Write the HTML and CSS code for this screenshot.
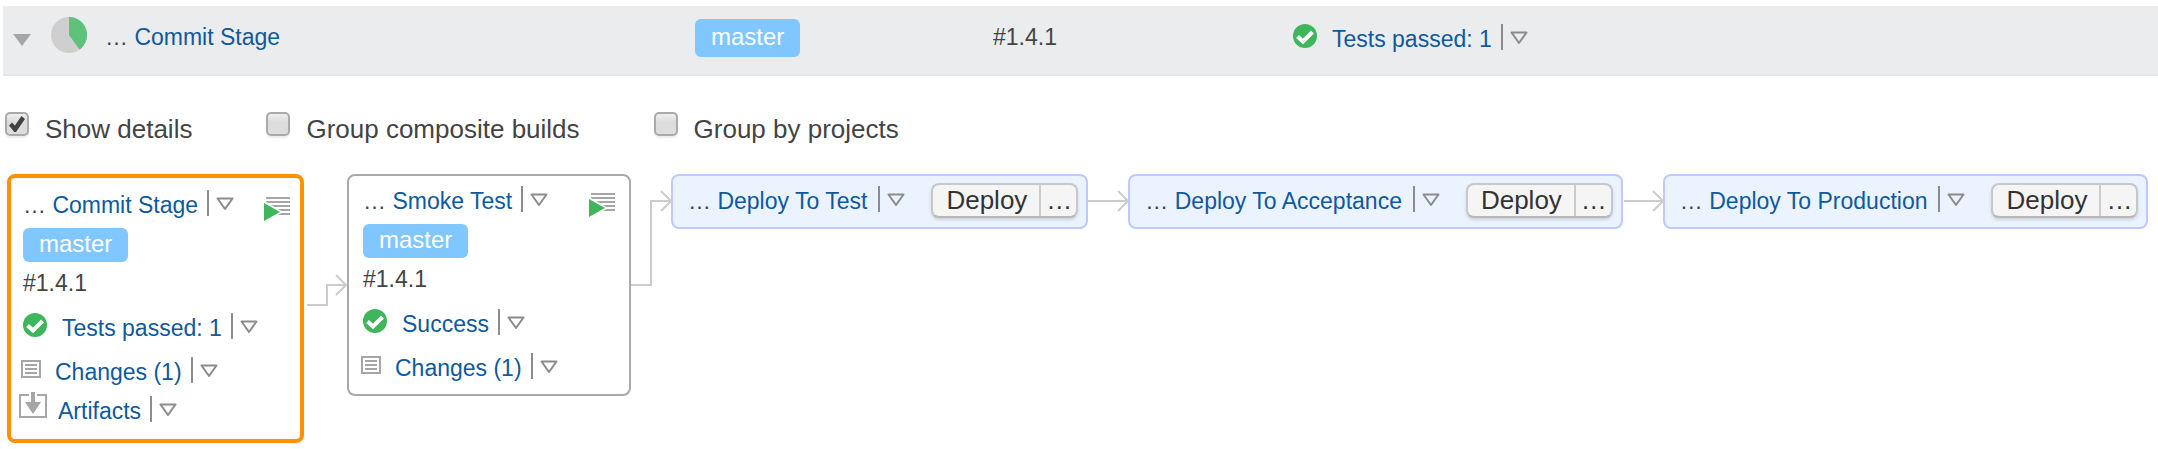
FILE: index.html
```html
<!DOCTYPE html>
<html lang="en">
<head>
<meta charset="utf-8">
<title>Commit Stage – Build chain</title>
<link rel="stylesheet" href="styles.css">
</head>
<body>
<svg class="defs" aria-hidden="true">
  <symbol id="caret" viewBox="0 0 18 13"><path d="M1.500 1.500H16.500L9 12Z" fill="none" stroke="#8c8c8c" stroke-width="2" stroke-linejoin="round"/></symbol>
  <symbol id="ok" viewBox="0 0 24 24"><circle cx="12" cy="12" r="12" fill="#3fb65c"/><path d="M4.500 12.500L10 17.500L19.500 8" fill="none" stroke="#fff" stroke-width="4"/></symbol>
  <symbol id="changes" viewBox="0 0 20 18"><path d="M1 1H19V17H1Z" fill="#fff" stroke="#a6a6a6" stroke-width="2"/><path d="M4 5H16M4 9H16M4 13H16" stroke="#a6a6a6" stroke-width="2"/></symbol>
  <symbol id="artifacts" viewBox="0 0 28 26"><path d="M10 3H1V25H27V3H18" fill="none" stroke="#a6a6a6" stroke-width="2"/><path d="M12 0H16V10H22L14 22L6 10H12Z" fill="#a6a6a6"/></symbol>
  <symbol id="queue" viewBox="0 0 26 24"><path d="M2 1H26M2 5H26M2 9H26M2 13H26M2 17H26" stroke="#a6a6a6" stroke-width="2"/><path d="M-2 2.500L19 15L-2 28Z" fill="#fff"/><path d="M0 6L16 15L0 24Z" fill="#3fb65c"/></symbol>
</svg>

<header class="build">
  <div class="build-name">
    <button class="toggle" type="button" aria-label="Collapse"><svg width="18" height="12" viewBox="0 0 18 12"><path d="M0 0H18L9 12Z" fill="#a6a6a6"/></svg></button>
    <svg class="pie" width="36" height="36" viewBox="0 0 36 36" aria-hidden="true"><circle cx="18" cy="18" r="18" fill="#cfcfcf"/><path d="M18 18V0A18 18 0 0 1 28.600 32.600Z" fill="#5ec27a"/></svg>
    <span class="line">… <a href="#commit">Commit Stage</a></span>
  </div>
  <div><span class="badge badge-tall">master</span></div>
  <div class="build-number line">#1.4.1</div>
  <div class="build-status"><svg class="ok-icon" width="24" height="24"><use href="#ok"/></svg><a class="line" href="#tests">Tests passed: 1</a><button class="more" type="button" aria-label="Test details"><svg width="18" height="13"><use href="#caret"/></svg></button></div>
</header>

<form class="options">
  <label><input type="checkbox" checked>Show details</label>
  <label><input type="checkbox">Group composite builds</label>
  <label><input type="checkbox">Group by projects</label>
</form>

<main class="chain">
  <section class="node node-current" id="commit">
    <div class="row title"><span class="line">… <a href="#commit">Commit Stage</a></span><button class="more" type="button" aria-label="Commit Stage menu"><svg width="18" height="13"><use href="#caret"/></svg></button><svg class="queue" width="26" height="24"><use href="#queue"/></svg></div>
    <span class="badge">master</span>
    <div class="number line">#1.4.1</div>
    <div class="row status"><svg class="ok-icon" width="24" height="24"><use href="#ok"/></svg><a class="line" href="#tests">Tests passed: 1</a><button class="more" type="button" aria-label="Test details"><svg width="18" height="13"><use href="#caret"/></svg></button></div>
    <div class="row changes"><svg class="changes-icon" width="20" height="18"><use href="#changes"/></svg><a class="line" href="#changes-1">Changes (1)</a><button class="more" type="button" aria-label="Change details"><svg width="18" height="13"><use href="#caret"/></svg></button></div>
    <div class="row artifacts"><svg class="artifacts-icon" width="28" height="26"><use href="#artifacts"/></svg><a class="line" href="#files">Artifacts</a><button class="more" type="button" aria-label="Artifact details"><svg width="18" height="13"><use href="#caret"/></svg></button></div>
  </section>

  <svg class="wire wire-step" width="43" height="36" viewBox="0 0 43 36" aria-hidden="true"><path d="M3 31H23V11H42M32 1L42 11L32 21"/></svg>

  <section class="node node-finished" id="smoke">
    <div class="row title"><span class="line">… <a href="#smoke">Smoke Test</a></span><button class="more" type="button" aria-label="Smoke Test menu"><svg width="18" height="13"><use href="#caret"/></svg></button><svg class="queue" width="26" height="24"><use href="#queue"/></svg></div>
    <span class="badge">master</span>
    <div class="number line">#1.4.1</div>
    <div class="row status"><svg class="ok-icon" width="24" height="24"><use href="#ok"/></svg><a class="line" href="#smoke-result">Success</a><button class="more" type="button" aria-label="Result details"><svg width="18" height="13"><use href="#caret"/></svg></button></div>
    <div class="row changes"><svg class="changes-icon" width="20" height="18"><use href="#changes"/></svg><a class="line" href="#changes-2">Changes (1)</a><button class="more" type="button" aria-label="Change details"><svg width="18" height="13"><use href="#caret"/></svg></button></div>
  </section>

  <svg class="wire wire-top" width="40" height="97" viewBox="0 0 40 97" aria-hidden="true"><path d="M0 95H20V11H40M30 1L40 11L30 21"/></svg>

  <section class="node node-deploy">
    <span class="line">… <a href="#test">Deploy To Test</a></span><button class="more" type="button" aria-label="Deploy To Test menu"><svg width="18" height="13"><use href="#caret"/></svg></button>
    <div class="split"><button type="button">Deploy</button><button type="button" aria-label="Custom deploy">…</button></div>
  </section>

  <svg class="wire wire-top" width="40" height="22" viewBox="0 0 40 22" aria-hidden="true"><path d="M0 11H40M30 1L40 11L30 21"/></svg>

  <section class="node node-deploy">
    <span class="line">… <a href="#acceptance">Deploy To Acceptance</a></span><button class="more" type="button" aria-label="Deploy To Acceptance menu"><svg width="18" height="13"><use href="#caret"/></svg></button>
    <div class="split"><button type="button">Deploy</button><button type="button" aria-label="Custom deploy">…</button></div>
  </section>

  <svg class="wire wire-top" width="40" height="22" viewBox="0 0 40 22" aria-hidden="true"><path d="M1 11H40M30 1L40 11L30 21"/></svg>

  <section class="node node-deploy">
    <span class="line">… <a href="#production">Deploy To Production</a></span><button class="more" type="button" aria-label="Deploy To Production menu"><svg width="18" height="13"><use href="#caret"/></svg></button>
    <div class="split"><button type="button">Deploy</button><button type="button" aria-label="Custom deploy">…</button></div>
  </section>
</main>
</body>
</html>
```

FILE: styles.css
```css
* { box-sizing: border-box; }

body {
  margin: 0;
  padding: 6px 0 6px 3px;
  background: #fff;
  color: #444;
  font: 23px/30px "Liberation Sans", Arial, sans-serif;
}

a { color: #10599c; text-decoration: none; }
a:hover { text-decoration: underline; }
button { font: inherit; color: inherit; cursor: pointer; }
svg { display: block; flex: none; }
.defs { position: absolute; width: 0; height: 0; }
.line { line-height: 30px; white-space: nowrap; }

/* Build header */
.build {
  display: grid;
  grid-template-columns: 692fr 298fr 300fr 865fr;
  align-items: start;
  height: 70px;
  background: #ebecee;
  border-bottom: 2px solid #e2e6ef;
}
.build-name { display: flex; align-items: flex-start; padding: 11px 0 0 10px; }
.build-name .line { margin: 5px 0 0 18px; }
.toggle { margin-top: 17px; padding: 0; border: 0; background: none; }
.pie { margin-left: 20px; }
.build-number { padding-top: 16px; }
.build-status { display: flex; align-items: flex-start; padding-top: 18px; }
.build-status .ok-icon { margin-right: 15px; }

.badge {
  display: block;
  width: max-content;
  padding: 0 16px 2px;
  border-radius: 6px;
  background: #80c6ff;
  color: #fff;
  font-size: 24px;
  line-height: 32px;
}
.badge-tall { margin-top: 13px; line-height: 36px; }

.more {
  height: 26px;
  margin-left: 9px;
  padding: 0 0 0 7px;
  border: 0;
  border-left: 2px solid #8c8c8c;
  background: none;
}

/* Display options */
.options {
  display: flex;
  gap: 74px;
  padding: 36px 0 28px 2px;
  font-size: 26px;
}
.options label { display: flex; gap: 16px; line-height: 34px; }
.options input {
  appearance: none;
  width: 24px;
  height: 24px;
  margin: 0;
  border: 2px solid #aaa;
  border-radius: 5px;
  background: linear-gradient(#eee, #dcdcdc 40%, #dedede);
  box-shadow: 0 2px 1px #eee;
}
.options input:checked::after {
  content: "";
  display: block;
  width: 16px;
  height: 16px;
  margin: 2px;
  background: #414244;
  clip-path: polygon(0 60%, 19% 40%, 37% 60%, 78% 0, 100% 18%, 44% 100%, 33% 100%);
}

/* Build chain */
.chain { display: flex; align-items: flex-start; padding-left: 4px; }
.node { flex: none; border-radius: 8px; background: #fff; }
.node-current { width: 297px; padding: 12px 10px 13px 8px; border: 4px solid #ff9100; }
.node-finished { width: 284px; padding: 10px 14px 11px 10px; border: 2px solid #a9a9a9; }
.node .badge, .number, .title, .status { margin-left: 4px; }

.row { display: flex; align-items: flex-start; }
.title { height: 30px; margin-bottom: 8px; }
.queue { margin: 7px 0 0 auto; }
.number { margin-top: 6px; }
.status { margin-top: 15px; }
.status .ok-icon { margin-right: 15px; }
.changes { margin-top: 14px; }
.changes-icon { margin: 3px 14px 0 2px; }
.artifacts { margin-top: 5px; }
.artifacts-icon { margin-right: 11px; }
.artifacts .line, .artifacts .more { margin-top: 4px; }

.node-deploy {
  display: flex;
  align-items: flex-start;
  padding: 10px 8px 11px 15px;
  border: 2px solid #c0c8ff;
  background: #eaf3ff;
}
.node-deploy .more { margin-left: 11px; }

.wire { fill: none; stroke: #ccc; stroke-width: 2; }
.wire-step { margin-top: 100px; }
.wire-top { margin-top: 16px; }

.split {
  display: flex;
  height: 35px;
  margin: -3px 0 -7px 26px;
  border: 2px solid #c8c8c8;
  border-bottom-color: #b8b8b8;
  border-radius: 8px;
  background: #f5f5f5;
  box-shadow: 0 2px 3px #ccd2dc;
  color: #333;
  font-size: 26px;
  line-height: 29px;
}
.split button { padding: 0 12px 0 13px; border: 0; background: none; }
.split button + button { padding: 0 4px 0 5px; border-left: 2px solid #ccc; }
```
